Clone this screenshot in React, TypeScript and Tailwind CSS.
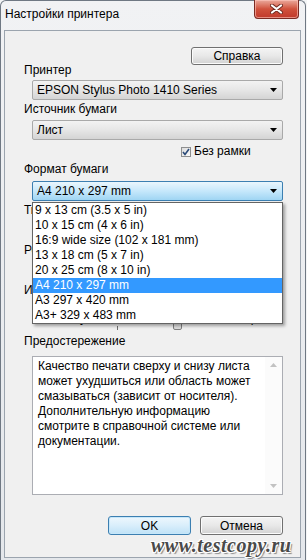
import React from "react";

const Arrow = () => (
  <svg width="7" height="4" viewBox="0 0 7 4">
    <path d="M0 0h7L3.5 4z" fill="#000" />
  </svg>
);

const Combo = ({ text, focused }: { text: string; focused?: boolean }) => (
  <div
    className={
      focused
        ? "ml-[8px] h-[20px] flex items-center justify-between pl-[4px] pr-[5px] rounded-[2px] border border-[#3c7fb1] bg-linear-to-b from-[#eaf6fd] via-[#c6e8fb] to-[#9fd5f3]"
        : "ml-[8px] h-[20px] flex items-center justify-between pl-[4px] pr-[5px] rounded-[2px] border border-[#a9a9a9] bg-linear-to-b from-[#f3f3f3] via-[#e6e6e6] to-[#d4d4d4]"
    }
  >
    <span className="leading-[15px]">{text}</span>
    <Arrow />
  </div>
);

const Label = ({ text, className }: { text: string; className?: string }) => (
  <div className={`h-[15px] leading-[15px] ${className ?? ""}`}>{text}</div>
);

const WinButton = ({ text, primary }: { text: string; primary?: boolean }) => (
  <div
    className={
      primary
        ? "w-[83px] h-[19px] flex items-center justify-center rounded-[3px] border border-[#3c7fb1] bg-linear-to-b from-[#eef7fd] via-[#d9eefb] to-[#bfe2f7] shadow-[inset_0_0_0_1px_#c6e7fa]"
        : "w-[83px] h-[19px] flex items-center justify-center rounded-[3px] border border-[#707070] bg-linear-to-b from-[#f4f4f4] via-[#e8e8e8] to-[#d2d2d2] shadow-[inset_0_0_0_1px_#fbfbfb]"
    }
  >
    {text}
  </div>
);

const sizes = [
  "9 x 13 cm (3.5 x 5 in)",
  "10 x 15 cm (4 x 6 in)",
  "16:9 wide size (102 x 181 mm)",
  "13 x 18 cm (5 x 7 in)",
  "20 x 25 cm (8 x 10 in)",
  "A4 210 x 297 mm",
  "A3 297 x 420 mm",
  "A3+ 329 x 483 mm",
];

const warning = [
  "Качество печати сверху и снизу листа",
  "может ухудшиться или область может",
  "смазываться (зависит от носителя).",
  "Дополнительную информацию",
  "смотрите в справочной системе или",
  "документации.",
];

export default function App() {
  return (
    <div className="relative w-[307px] h-[560px] overflow-hidden bg-[#f4f5f6] text-[12px] text-black font-['Liberation_Sans',Arial,sans-serif]">
      <div className="w-[306px] h-[560px] rounded-t-[6px] border border-b-0 border-[#6f7883] bg-linear-to-b from-[#f1f2f4] to-[#e4e7eb]">
        {/* title bar */}
        <div className="h-[29px] flex items-start justify-between">
          <div className="pl-[4px] pt-[6px] leading-[15px]">Настройки принтера</div>
          <div className="mr-[6px] -mt-[1px] w-[45px] h-[19px] flex items-center justify-center rounded-b-[4px] border border-t-0 border-[#7a2a22] bg-linear-to-b from-[#e9a99c] via-[#d0513c] to-[#c0392b] shadow-[inset_0_0_0_1px_rgba(255,200,190,0.6)]">
            <svg width="13" height="10" viewBox="0 0 13 10">
              <path d="M2 1.5L11 8.5M11 1.5L2 8.5" stroke="#6e2a20" strokeWidth="4" strokeLinecap="round" />
              <path d="M2 1.5L11 8.5M11 1.5L2 8.5" stroke="#fff" strokeWidth="2.2" strokeLinecap="round" />
            </svg>
          </div>
        </div>

        {/* dialog body */}
        <div className="ml-[3px] w-[297px] h-[528px] border border-[#9ba4ae] bg-[#f0f0f0] pl-[19px] pr-[17px]">
          <div className="h-[32px] pt-[16px] flex justify-end">
            <div className="w-[92px] h-[18px] flex items-center justify-center rounded-[3px] border border-[#707070] bg-linear-to-b from-[#f4f4f4] via-[#e8e8e8] to-[#d2d2d2] shadow-[inset_0_0_0_1px_#fbfbfb]">
              Справка
            </div>
          </div>
          <Label text="Принтер" />
          <div className="mt-[2px]">
            <Combo text="EPSON Stylus Photo 1410 Series" />
          </div>
          <Label text="Источник бумаги" className="mt-[2px]" />
          <div className="mt-[3px]">
            <Combo text="Лист" />
          </div>
          <div className="mt-[4px] h-[15px] flex items-center pl-[157px] gap-[3px]">
            <div className="w-[10px] h-[10px] border border-[#8e8f8f] bg-linear-to-br from-[#dcdcdc] to-[#fbfbfb] flex items-center justify-center">
              <svg width="8" height="8" viewBox="0 0 8 8">
                <path d="M1 4l2 2.5L7 1" fill="none" stroke="#2a4a78" strokeWidth="1.6" />
              </svg>
            </div>
            <span className="leading-[15px]">Без рамки</span>
          </div>
          <Label text="Формат бумаги" className="mt-[3px]" />
          <div className="relative mt-[4px] z-10">
            <Combo text="A4 210 x 297 mm" focused />
            <div className="absolute left-[8px] top-[21px] w-[251px] border border-[#646464] bg-white shadow-[2px_2px_3px_rgba(0,0,0,0.35)]">
              {sizes.map((s, i) => (
                <div
                  key={s}
                  className={
                    i === 5
                      ? "h-[15px] leading-[15px] pl-[2px] bg-[#3399ff] text-white"
                      : "h-[15px] leading-[15px] pl-[2px]"
                  }
                >
                  {s}
                </div>
              ))}
            </div>
          </div>

          {/* content hidden under the open list */}
          <Label text="Тип бумаги" className="mt-[2px]" />
          <div className="mt-[3px]">
            <Combo text="Обычная бумага" />
          </div>
          <Label text="Режим печати" className="mt-[2px]" />
          <div className="mt-[3px]">
            <Combo text="Автоматически" />
          </div>
          <Label text="Интенсивность" className="mt-[2px]" />
          <div className="h-[30px] mt-[2px] flex items-end pl-[12px]">
            <span className="w-[74px] leading-[15px] mb-[4px]">Качеству</span>
            <div className="relative w-[120px] h-[30px]">
              <div className="absolute left-[4px] right-[4px] top-[16px] h-[3px] border border-[#b0b0b0] bg-[#e6e6e6]" />
              <div className="absolute left-[63px] top-[12px] w-[9px] h-[18px] rounded-[2px] border border-[#808080] bg-linear-to-b from-[#f6f6f6] to-[#dadada]" />
              <div className="absolute left-[7px] top-[26px] w-[1px] h-[4px] bg-[#707070]" />
            </div>
            <span className="leading-[15px] mb-[4px]">Скорость</span>
          </div>

          <Label text="Предостережение" className="mt-[4px]" />
          <div className="mt-[7px] ml-[8px] h-[139px] flex border border-[#abadb3] bg-white">
            <div className="flex-1 pl-[5px] pt-[2px]">
              {warning.map((l) => (
                <div key={l} className="h-[15px] leading-[15px] whitespace-nowrap">
                  {l}
                </div>
              ))}
            </div>
            <div className="w-[17px] flex flex-col items-center justify-between py-[6px] bg-[#fbfbfb]">
              <svg width="7" height="4" viewBox="0 0 7 4">
                <path d="M0 4h7L3.5 0z" fill="#c2c2c2" />
              </svg>
              <svg width="7" height="4" viewBox="0 0 7 4">
                <path d="M0 0h7L3.5 4z" fill="#c2c2c2" />
              </svg>
            </div>
          </div>
          <div className="mt-[21px] flex justify-end gap-[9px]">
            <WinButton text="OK" primary />
            <WinButton text="Отмена" />
          </div>
        </div>
      </div>

      {/* watermark */}
      <div className="absolute left-[151px] top-[530px] text-[20px] font-bold italic tracking-[0.5px] text-[#4a4a4a] font-['Liberation_Serif',serif] [text-shadow:1px_1px_0_#fff,-1px_-1px_0_#fff,1px_-1px_0_#fff,-1px_1px_0_#fff,2px_2px_1px_#888]">
        www.testcopy.ru
      </div>
    </div>
  );
}
